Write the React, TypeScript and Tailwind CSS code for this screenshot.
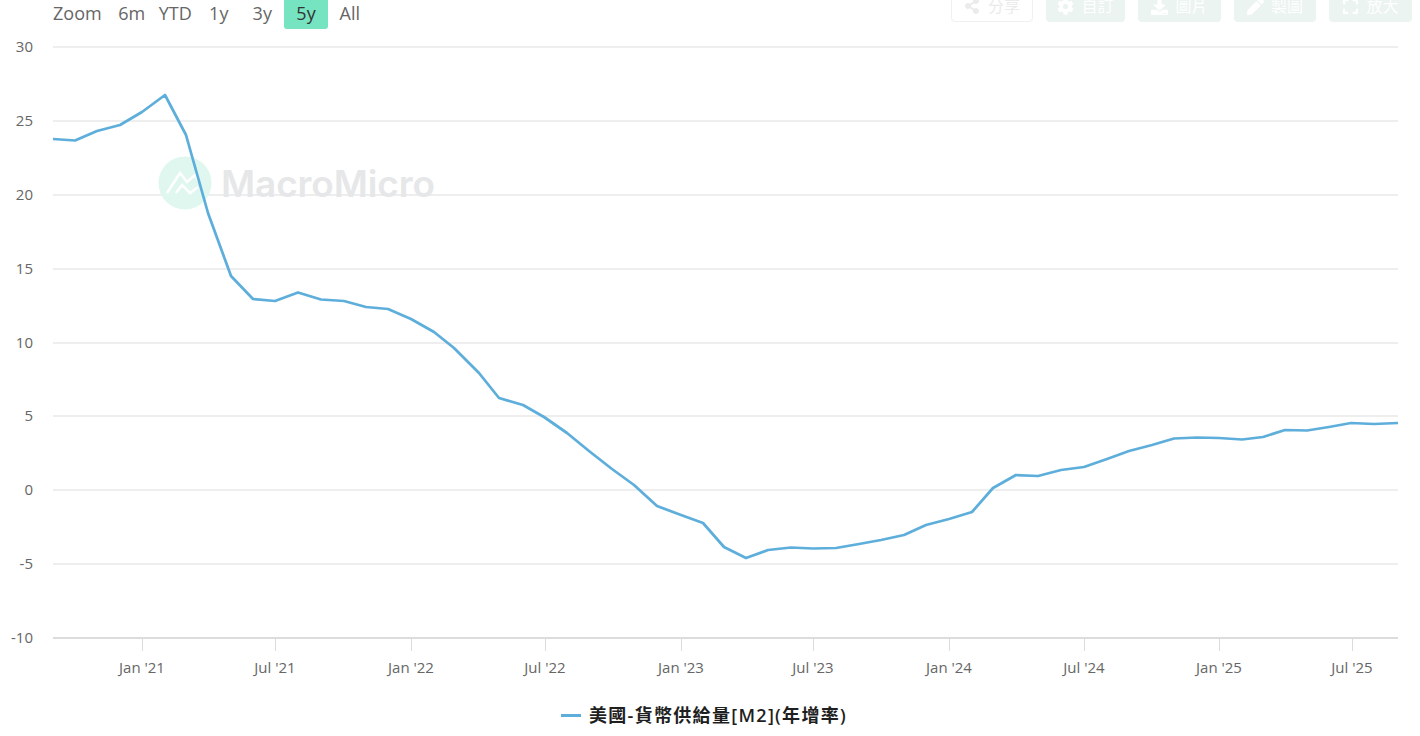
import { FaShareAlt, FaCog, FaDownload, FaPen, FaExpand } from "react-icons/fa";

const points: [number, number][] = [
  [53, 139], [75, 140.5], [97, 131], [120, 125], [142, 112], [165, 95], [186, 135], [208, 213],
  [231, 276], [253, 299], [275, 301], [298, 292.5], [321, 299.5], [344, 301], [366, 307], [388, 309],
  [411, 319], [434, 332], [454, 348], [479, 373], [499, 398], [523, 405], [544, 417], [567, 433],
  [589, 451], [612, 469], [634, 485], [657, 506], [681, 515], [703, 523], [724, 547], [746, 558],
  [768, 550], [791, 547.5], [813, 548.5], [836, 548], [859, 544], [881, 540], [904, 535], [926, 525],
  [949, 519], [972, 512], [993, 488], [1016, 475], [1038, 476], [1061, 470], [1084, 467], [1107, 459],
  [1129, 451], [1152, 445], [1174, 438.5], [1197, 437.5], [1219, 438], [1242, 439.5], [1263, 437],
  [1285, 430], [1307, 430.5], [1329, 427], [1351, 423], [1374, 424], [1398, 423],
];

const yAxis = [
  { label: "30", y: 47 },
  { label: "25", y: 121 },
  { label: "20", y: 195 },
  { label: "15", y: 269 },
  { label: "10", y: 343 },
  { label: "5", y: 416 },
  { label: "0", y: 490 },
  { label: "-5", y: 564 },
];

const xAxis = [
  { label: "Jan '21", x: 142 },
  { label: "Jul '21", x: 275 },
  { label: "Jan '22", x: 411 },
  { label: "Jul '22", x: 545 },
  { label: "Jan '23", x: 681 },
  { label: "Jul '23", x: 813 },
  { label: "Jan '24", x: 949 },
  { label: "Jul '24", x: 1084 },
  { label: "Jan '25", x: 1219 },
  { label: "Jul '25", x: 1352 },
];

const ranges = ["6m", "YTD", "1y", "3y", "5y", "All"];

const tools = [
  { label: "自訂", Icon: FaCog, width: "w-[79px]" },
  { label: "圖片", Icon: FaDownload, width: "w-[83px]" },
  { label: "製圖", Icon: FaPen, width: "w-[82px]" },
  { label: "放大", Icon: FaExpand, width: "w-[83px]" },
];

export default function App() {
  return (
    <div className="w-[1420px] h-[736px] overflow-hidden bg-white font-['Open_Sans','Noto_Sans_CJK_TC',sans-serif]">
      {/* Toolbar, cut off by the top of the page */}
      <div className="h-[29px] flex justify-between items-start pl-[53px] pr-[8px]">
        <div className="flex items-start text-[18px] leading-[27px] text-[#666666]">
          <span className="w-[57px]">Zoom</span>
          {ranges.map((range) =>
            range === "5y" ? (
              <span
                key={range}
                className="w-[44px] h-[29px] text-center rounded-b-[3px] bg-[#76e4c0] text-[#333333]"
              >
                {range}
              </span>
            ) : (
              <span key={range} className="w-[43.5px] text-center">
                {range}
              </span>
            ),
          )}
        </div>
        <div className="flex items-start gap-[13px] text-[16px] leading-[20px]">
          <div className="w-[82px] h-[32px] -mt-[10px] flex items-center justify-center gap-[8px] rounded-[4px] border border-[#f0f0f0] text-[#ebebeb]">
            <FaShareAlt className="w-[16px] h-[16px]" />
            <span>分享</span>
          </div>
          {tools.map(({ label, Icon, width }) => (
            <div
              key={label}
              className={`${width} h-[32px] -mt-[10px] flex items-center justify-center gap-[7px] rounded-[4px] bg-[#ebf4f1] text-white`}
            >
              <Icon className="w-[17px] h-[17px]" />
              <span>{label}</span>
            </div>
          ))}
        </div>
      </div>

      {/* viewBox keeps page coordinates for the chart */}
      <svg width="1420" height="666" viewBox="0 29 1420 666" className="block">
        {yAxis.map((tick) => (
          <g key={tick.label}>
            <line x1="53" x2="1398" y1={tick.y} y2={tick.y} stroke="#e8e8e8" strokeWidth="1.5" />
            <text x="33" y={tick.y + 5} textAnchor="end" fontSize="15" fill="#666666">
              {tick.label}
            </text>
          </g>
        ))}

        {/* Watermark */}
        <circle cx="185" cy="183" r="26.5" fill="#dff7ef" />
        <path
          d="M167 193 L180 173 L187 182 L195 175 L199 182 M176 193 L182 185 L190 193 L198 187"
          fill="none"
          stroke="#ffffff"
          strokeWidth="2.5"
        />
        <text
          x="221"
          y="197"
          fontFamily="Inter, sans-serif"
          fontSize="37"
          fontWeight="600"
          fill="#e6e7e8"
          textLength="214"
        >
          MacroMicro
        </text>

        <line x1="53" x2="1398" y1="638" y2="638" stroke="#dcdcdc" strokeWidth="2" />
        <text x="33" y="643" textAnchor="end" fontSize="15" fill="#666666">
          -10
        </text>
        {xAxis.map((tick) => (
          <g key={tick.label}>
            <line x1={tick.x + 0.5} x2={tick.x + 0.5} y1="638" y2="651" stroke="#dcdcdc" strokeWidth="1" />
            <text x={tick.x} y="673" textAnchor="middle" fontSize="15" fill="#666666">
              {tick.label}
            </text>
          </g>
        ))}

        <polyline
          points={points.map((p) => p.join(",")).join(" ")}
          fill="none"
          stroke="#5eaedb"
          strokeWidth="2.75"
          strokeLinejoin="round"
        />
      </svg>

      {/* Legend */}
      <div className="w-[1408px] h-[41px] flex items-center justify-center gap-[8px]">
        <span className="w-[20px] h-[3px] bg-[#5eaedb]" />
        <span className="text-[18px] font-semibold tracking-[1.3px] text-[#1f1f1f]">
          美國-貨幣供給量[M2](年增率)
        </span>
      </div>
    </div>
  );
}
